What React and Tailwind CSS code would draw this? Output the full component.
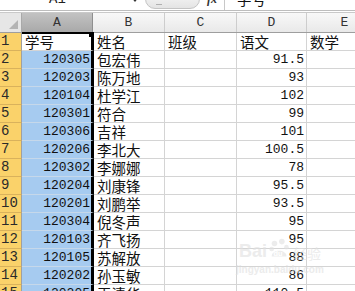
import React from 'react';

const cjk = { fontFamily: '"Noto Sans CJK SC", "Liberation Sans", sans-serif' };
const mono = { fontFamily: '"Liberation Mono", "Noto Sans CJK SC", monospace' };

// id, name, class, chinese score
const rows = [
    ['120305', '包宏伟', '', '91.5'],
    ['120203', '陈万地', '', '93'],
    ['120104', '杜学江', '', '102'],
    ['120301', '符合', '', '99'],
    ['120306', '吉祥', '', '101'],
    ['120206', '李北大', '', '100.5'],
    ['120302', '李娜娜', '', '78'],
    ['120204', '刘康锋', '', '95.5'],
    ['120201', '刘鹏举', '', '93.5'],
    ['120304', '倪冬声', '', '95'],
    ['120103', '齐飞扬', '', '95'],
    ['120105', '苏解放', '', '88'],
    ['120202', '孙玉敏', '', '86'],
    ['120205', '王清华', '', '110.5'],
];

function FormulaBar() {
    return (
        <div className="flex h-[23px] -mt-[12px] items-center border-b border-[#bdbdbd] bg-white shrink-0">
            <div className="w-[145px] h-full flex items-center">
                <div className="w-[115px] text-center text-[14px] text-[#222]" style={mono}>A1</div>
                <div className="ml-auto mr-[6px] w-0 h-0 border-l-[4px] border-r-[4px] border-t-[5px] border-l-transparent border-r-transparent border-t-[#333]" />
            </div>
            <div className="w-[55px] h-[20px] rounded-full border border-[#c4c4c4] bg-gradient-to-b from-[#fafafa] to-[#e4e4e4] flex items-center pl-[10px]">
                <span className="w-[6px] h-[1px] bg-[#b0b0b0] mt-[10px]" />
            </div>
            <div className="w-[24px] text-center italic text-[12px] text-[#333] font-bold" style={{ fontFamily: '"Liberation Serif", serif' }}>fx</div>
            <div className="h-full border-l border-[#c8c8c8] pl-[12px] flex items-center text-[14.5px] text-[#111]" style={cjk}>学号</div>
        </div>
    );
}

function HeaderRow() {
    const cols = [
        { l: 'B', w: 'w-[72px]' },
        { l: 'C', w: 'w-[72px]' },
        { l: 'D', w: 'w-[70px]' },
        { l: 'E', w: 'w-[76px]' },
    ];
    return (
        <div className="flex h-[21px] mt-[1px] border-t border-[#c9c9c9] border-b border-b-[#9e9e9e] shrink-0 text-[13px] text-[#333]" style={mono}>
            <div className="w-[22px] shrink-0 bg-[#e6e6e6] border-r border-[#a9a9a9] relative">
                <svg className="absolute right-[3px] bottom-[3px]" width="9" height="9" viewBox="0 0 9 9">
                    <path d="M9 0 L9 9 L0 9 Z" fill="#b4b4b4" />
                </svg>
            </div>
            <div className="w-[71px] shrink-0 bg-gradient-to-b from-[#c2c2c2] to-[#a9a9a9] border-r border-[#8f8f8f] flex items-center justify-center">A</div>
            {cols.map(c => (
                <div key={c.l} className={`${c.w} shrink-0 bg-gradient-to-b from-[#f8f8f8] to-[#e9e9e9] border-r border-[#cdcdcd] flex items-center justify-center`}>
                    {c.l}
                </div>
            ))}
        </div>
    );
}

function Row({ num, a, b, c, d, e, first }) {
    return (
        <div className="flex h-[18px] shrink-0">
            <div className="w-[22px] shrink-0 bg-[#fad26a] border-r border-[#a0a0a0] border-b border-b-[#d9b25c] text-[14px] leading-[17px] text-[#2a2a2a] pl-[1px]" style={mono}>
                {num}
            </div>
            <div
                className={`w-[72px] shrink-0 border-r-[3px] border-r-black border-b ${first ? 'bg-white border-b-[#d4d4d4] border-t-2 border-t-black -mt-[1px] h-[19px] text-left pl-[3px] leading-[15px]' : 'bg-[#a6cbf0] border-b-[#c6d8ea] text-right pr-[1px] leading-[17px]'} text-[13px] text-[#111] overflow-hidden whitespace-nowrap relative`}
                style={first ? cjk : mono}
            >
                {first ? <span className="text-[14.5px]">{a}</span> : a}
                {first && <span className="absolute -right-[3px] top-[-2px] w-[5px] h-[5px] bg-black" />}
            </div>
            <div className="w-[71px] shrink-0 border-r border-b border-[#d4d4d4] pl-[3px] text-[14.5px] leading-[17px] text-[#111] whitespace-nowrap" style={cjk}>{b}</div>
            <div className="w-[72px] shrink-0 border-r border-b border-[#d4d4d4] pl-[3px] text-[14.5px] leading-[17px] text-[#111] whitespace-nowrap" style={cjk}>{c}</div>
            <div
                className={`w-[70px] shrink-0 border-r border-b border-[#d4d4d4] ${first ? 'pl-[3px] text-[14.5px]' : 'text-right pr-[2px] text-[13px]'} leading-[17px] text-[#111] whitespace-nowrap`}
                style={first ? cjk : mono}
            >
                {d}
            </div>
            <div className="w-[76px] shrink-0 border-r border-b border-[#d4d4d4] pl-[3px] text-[14.5px] leading-[17px] text-[#111] whitespace-nowrap" style={cjk}>{e}</div>
        </div>
    );
}

export default function App() {
    return (
        <div className="w-[355px] h-[291px] overflow-hidden bg-white flex flex-col relative">
            <FormulaBar />
            <HeaderRow />
            <Row num="1" a="学号" b="姓名" c="班级" d="语文" e="数学" first />
            {rows.map((r, i) => (
                <Row key={r[0]} num={String(i + 2)} a={r[0]} b={r[1]} c={r[2]} d={r[3]} e="" />
            ))}

            {/* baidu watermark */}
            <div className="absolute left-[236px] top-[238px] pointer-events-none opacity-60 flex flex-col items-center">
                <div className="flex items-end gap-[1px]">
                    <span className="text-[18px] font-bold leading-none text-[#e0e0e0]" style={{ fontFamily: '"Liberation Sans", sans-serif' }}>Bai</span>
                    <svg width="24" height="22" viewBox="0 0 26 22">
                        <circle cx="7" cy="5" r="3" fill="#e0e0e0" />
                        <circle cx="15" cy="3" r="3" fill="#e0e0e0" />
                        <circle cx="4" cy="11" r="2.5" fill="#e0e0e0" />
                        <circle cx="20" cy="9" r="2.5" fill="#e0e0e0" />
                        <path d="M4 19 C4 11 20 11 20 19 Z" fill="#e0e0e0" />
                        <text x="6" y="19" fontSize="8" fill="#fff" fontFamily="Liberation Sans" fontWeight="bold">du</text>
                    </svg>
                    <span className="text-[14px] leading-none text-[#e0e0e0]" style={cjk}>经验</span>
                </div>
                <span className="text-[10px] leading-none mt-[5px] text-[#e0e0e0] font-bold" style={{ fontFamily: '"Liberation Sans", sans-serif' }}>jingyan.baidu.com</span>
            </div>
        </div>
    );
}
